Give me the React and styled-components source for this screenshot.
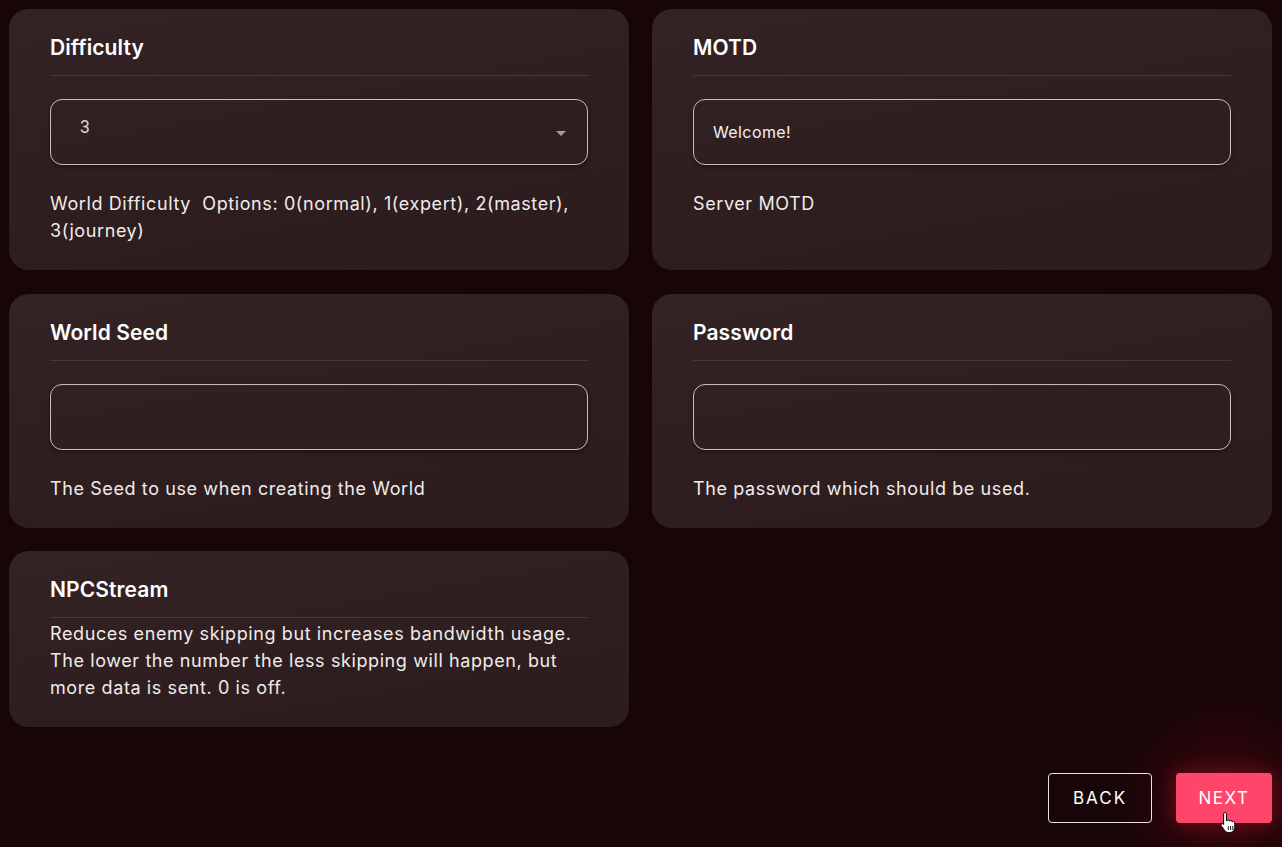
import React from "react";
import styled, { createGlobalStyle } from "styled-components";

const Global = createGlobalStyle`
  html, body { margin: 0; padding: 0; background: #180507; }
  body {
    font-family: "Inter", "Open Sans", sans-serif;
    color: #f4eeee;
    -webkit-font-smoothing: antialiased;
  }
  * { box-sizing: border-box; }
`;

const Page = styled.div`
  min-height: 847px;
  width: 1282px;
  padding: 9px 10px 24px 9px;
  background: radial-gradient(circle at 1225px 800px, rgba(120, 10, 25, 0.32) 0, rgba(24, 5, 7, 0) 110px), #180507;
  display: flex;
  flex-direction: column;
`;

const Grid = styled.div`
  display: grid;
  grid-template-columns: 620px 620px;
  column-gap: 23px;
  row-gap: 23.5px;
  align-items: stretch;
`;

const Card = styled.section`
  background: linear-gradient(170deg, #342325 0%, #2e1e1f 60%, #2d1c1e 100%);
  border-radius: 20px;
  padding: 24px 41px 26px 41px;
  display: flex;
  flex-direction: column;
`;

const Title = styled.h2`
  margin: 0;
  font-size: 21px;
  line-height: 30px;
  font-weight: 600;
  color: #ffffff;
  letter-spacing: 0.1px;
  padding-bottom: 12px;
  border-bottom: 1px solid rgba(255, 255, 255, 0.11);
`;

const Field = styled.div`
  margin-top: 23px;
  height: 66px;
  border: 1px solid #c9bcbc;
  border-radius: 12px;
  box-shadow: 0 2px 4px rgba(0, 0, 0, 0.35);
  display: flex;
  align-items: center;
  padding: 0 ${p => (p.$select ? "21px" : "19px")} 0 ${p => (p.$select ? "29px" : "19px")};
  justify-content: space-between;
`;

const SelectValue = styled.span`
  font-family: "Roboto", sans-serif;
  font-size: 17.5px;
  color: #ddd3d3;
  margin-top: -10px;
`;

const InputValue = styled.span`
  font-size: 16px;
  letter-spacing: 0.4px;
  color: #f6f0f0;
`;

const Caret = styled.span`
  width: 0;
  height: 0;
  border-left: 5px solid transparent;
  border-right: 5px solid transparent;
  border-top: 5px solid #a59b9b;
  margin-top: 2px;
`;

const Desc = styled.p`
  margin: ${p => (p.$tight ? "2px" : "25px")} 0 0 0;
  font-size: 18px;
  letter-spacing: 0.6px;
  line-height: 27px;
  color: #f1ebeb;
  white-space: pre-wrap;
`;

const Footer = styled.div`
  display: flex;
  justify-content: flex-end;
  gap: 24px;
  margin-top: 46px;
`;

const Button = styled.button`
  position: relative;
  width: ${p => (p.$primary ? "96px" : "104px")};
  height: 50px;
  padding: 0;
  font-family: "Inter", sans-serif;
  font-size: 17px;
  letter-spacing: ${p => (p.$primary ? "1.5px" : "2px")};
  font-weight: 400;
  color: #ffffff;
  border-radius: 4px;
  cursor: pointer;
  background: ${p => (p.$primary ? "#fd4669" : "transparent")};
  border: ${p => (p.$primary ? "none" : "1px solid #e9e2e2")};
  box-shadow: ${p => (p.$primary ? "0 0 22px rgba(230, 20, 60, 0.45)" : "none")};
`;

const Cursor = styled.svg`
  position: absolute;
  left: 44px;
  top: 38px;
`;

function Hand() {
  return (
    <Cursor width="16" height="24" viewBox="0 0 16 24">
      <path
        d="M5 1.5c.8 0 1.5.7 1.5 1.5v7l.2-.1c.3-.6.9-1 1.6-.9.7.1 1.1.6 1.2 1.2.3-.5.9-.8 1.5-.7.7.1 1.1.6 1.2 1.3.3-.4.8-.6 1.3-.5.8.1 1.3.8 1.3 1.6v4.6c0 2.8-2 5-4.8 5H8.6c-1.6 0-3-.8-3.9-2L1.3 15c-.5-.7-.3-1.6.4-2 .6-.4 1.4-.2 1.9.3l-.1-.1.1.1V3c0-.8.6-1.5 1.4-1.5z"
        fill="#fff"
        stroke="#000"
        strokeWidth="1"
      />
      <path d="M8.3 15v4M10.6 15v4M12.8 15v4" stroke="#000" strokeWidth="0.9" />
    </Cursor>
  );
}

export default function App() {
  return (
    <>
      <Global />
      <Page>
        <Grid>
          <Card>
            <Title>Difficulty</Title>
            <Field $select>
              <SelectValue>3</SelectValue>
              <Caret />
            </Field>
            <Desc>{"World Difficulty  Options: 0(normal), 1(expert), 2(master), 3(journey)"}</Desc>
          </Card>
          <Card>
            <Title>MOTD</Title>
            <Field>
              <InputValue>Welcome!</InputValue>
            </Field>
            <Desc>Server MOTD</Desc>
          </Card>
          <Card>
            <Title>World Seed</Title>
            <Field />
            <Desc>The Seed to use when creating the World</Desc>
          </Card>
          <Card>
            <Title>Password</Title>
            <Field />
            <Desc>The password which should be used.</Desc>
          </Card>
          <Card>
            <Title>NPCStream</Title>
            <Desc $tight>
              Reduces enemy skipping but increases bandwidth usage. The lower the number the less skipping will happen, but more data is sent. 0 is off.
            </Desc>
          </Card>
        </Grid>
        <Footer>
          <Button>BACK</Button>
          <Button $primary>
            NEXT
            <Hand />
          </Button>
        </Footer>
      </Page>
    </>
  );
}
